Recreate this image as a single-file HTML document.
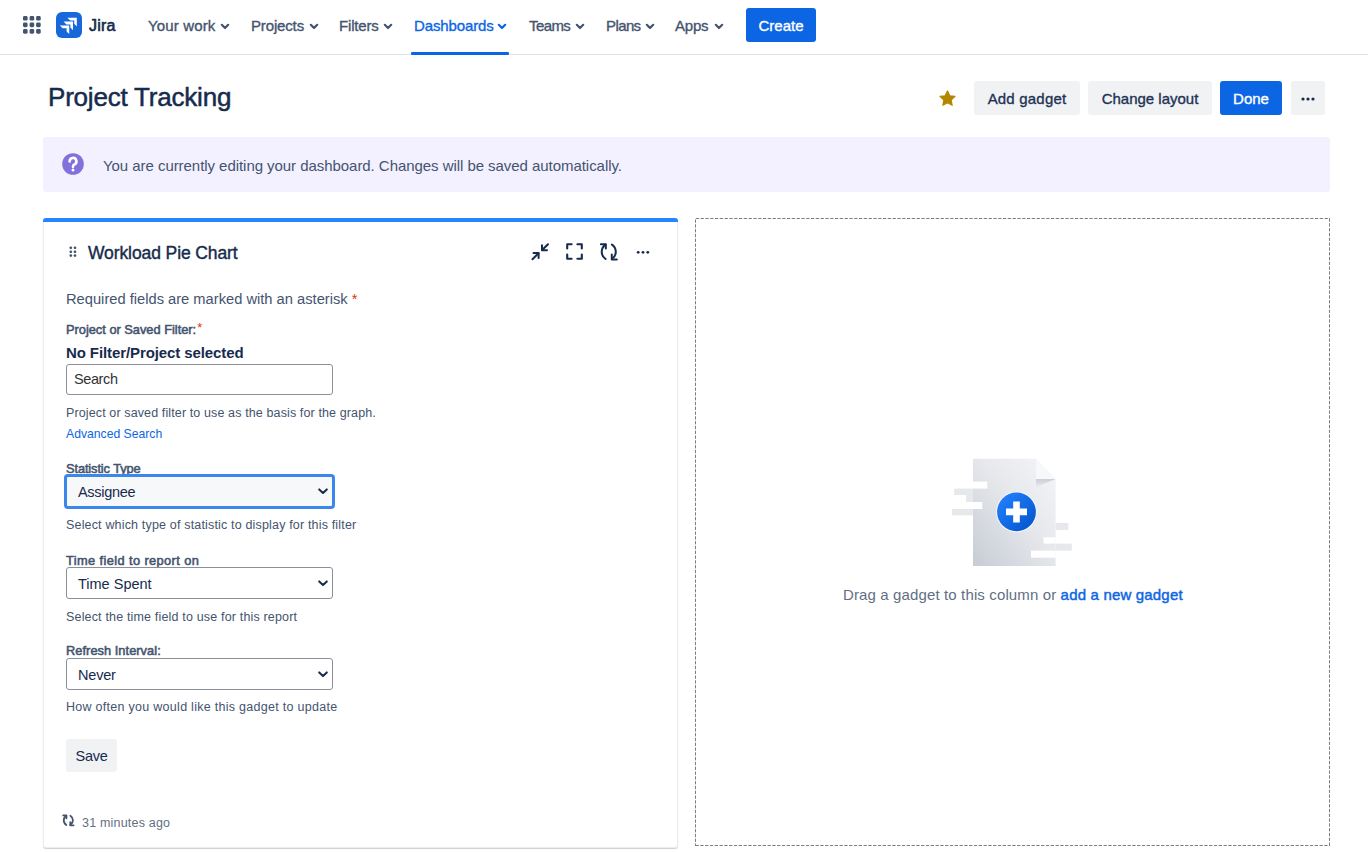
<!DOCTYPE html>
<html><head><meta charset="utf-8">
<style>
*{box-sizing:border-box;margin:0;padding:0}
html,body{width:1368px;height:852px;overflow:hidden;background:#fff;font-family:"Liberation Sans",sans-serif;color:#172B4D}
.a{position:absolute;white-space:nowrap}
#nav{position:absolute;left:0;top:0;width:1368px;height:55px;border-bottom:1px solid #DFE1E6;background:#fff}
.ni{position:absolute;top:17px;font-size:15px;font-weight:400;color:#44546F;line-height:17px;-webkit-text-stroke-width:0.35px}
.chev{position:absolute;top:22.5px}
.btn{position:absolute;border-radius:3px;background:#F1F2F4;color:#44546F;font-size:15px;font-weight:400;line-height:36px;height:34px;text-align:center;-webkit-text-stroke-width:0.35px}
.lbl{font-size:12.8px;font-weight:400;color:#44546F;line-height:15px;-webkit-text-stroke-width:0.55px}
.help{font-size:12.5px;color:#44546F;line-height:14px;letter-spacing:0.17px}
.sel{position:absolute;left:66px;width:267px;height:32px;border:1px solid #8A8F99;border-radius:3px;background:#fff}
.selt{position:absolute;left:12px;top:7px;font-size:14.5px;color:#172B4D;line-height:17px;letter-spacing:-0.2px}
.selc{position:absolute;right:5px;top:12px}
</style></head><body>

<div id="nav">
  <!-- grid icon -->
  <svg class="a" style="left:23px;top:16px" width="18" height="18" viewBox="0 0 18 18">
    <g fill="#44546F">
      <rect x="0" y="0" width="4.6" height="4.6" rx="1.4"/><rect x="6.6" y="0" width="4.6" height="4.6" rx="1.4"/><rect x="13.1" y="0" width="4.6" height="4.6" rx="1.4"/>
      <rect x="0" y="6.6" width="4.6" height="4.6" rx="1.4"/><rect x="6.6" y="6.6" width="4.6" height="4.6" rx="1.4"/><rect x="13.1" y="6.6" width="4.6" height="4.6" rx="1.4"/>
      <rect x="0" y="13.1" width="4.6" height="4.6" rx="1.4"/><rect x="6.6" y="13.1" width="4.6" height="4.6" rx="1.4"/><rect x="13.1" y="13.1" width="4.6" height="4.6" rx="1.4"/>
    </g>
  </svg>
  <!-- jira logo -->
  <svg class="a" style="left:56px;top:12px" width="26" height="26" viewBox="0 0 26 26">
    <rect width="26" height="26" rx="6" fill="#1868DB"/>
    <g fill="#fff">
      <path d="M11.4 5.8H20.8V14.4L18.2 11.8V8.6H14.2Z"/>
      <path d="M7.6 9.6H17V18.2L14.4 15.6V12.4H10.4Z"/>
      <path d="M3.8 13.4H13.2V22L10.6 19.4V16.2H6.6Z"/>
    </g>
  </svg>
  <div class="a" style="left:89px;top:17px;font-size:16px;font-weight:400;color:#172B4D;line-height:18px;letter-spacing:0.2px;-webkit-text-stroke:0.6px #172B4D">Jira</div>

  <div class="ni" style="left:148px;letter-spacing:0.15px">Your work</div>
  <svg class="chev" style="left:220px" width="10" height="7" viewBox="0 0 10 7"><path d="M1.8 1.8L5 5L8.2 1.8" stroke="#44546F" stroke-width="2.2" fill="none" stroke-linecap="round" stroke-linejoin="round"/></svg>
  <div class="ni" style="left:251px;letter-spacing:-0.15px">Projects</div>
  <svg class="chev" style="left:309px" width="10" height="7" viewBox="0 0 10 7"><path d="M1.8 1.8L5 5L8.2 1.8" stroke="#44546F" stroke-width="2.2" fill="none" stroke-linecap="round" stroke-linejoin="round"/></svg>
  <div class="ni" style="left:339px;letter-spacing:-0.17px">Filters</div>
  <svg class="chev" style="left:383px" width="10" height="7" viewBox="0 0 10 7"><path d="M1.8 1.8L5 5L8.2 1.8" stroke="#44546F" stroke-width="2.2" fill="none" stroke-linecap="round" stroke-linejoin="round"/></svg>
  <div class="ni" style="left:414px;color:#0C66E4;letter-spacing:-0.13px">Dashboards</div>
  <svg class="chev" style="left:497px" width="10" height="7" viewBox="0 0 10 7"><path d="M1.8 1.8L5 5L8.2 1.8" stroke="#0C66E4" stroke-width="2.2" fill="none" stroke-linecap="round" stroke-linejoin="round"/></svg>
  <div class="a" style="left:411px;top:52px;width:98px;height:3px;background:#0C66E4;border-radius:1px"></div>
  <div class="ni" style="left:529px;letter-spacing:-0.6px">Teams</div>
  <svg class="chev" style="left:575px" width="10" height="7" viewBox="0 0 10 7"><path d="M1.8 1.8L5 5L8.2 1.8" stroke="#44546F" stroke-width="2.2" fill="none" stroke-linecap="round" stroke-linejoin="round"/></svg>
  <div class="ni" style="left:606px;letter-spacing:-0.6px">Plans</div>
  <svg class="chev" style="left:645px" width="10" height="7" viewBox="0 0 10 7"><path d="M1.8 1.8L5 5L8.2 1.8" stroke="#44546F" stroke-width="2.2" fill="none" stroke-linecap="round" stroke-linejoin="round"/></svg>
  <div class="ni" style="left:675px;letter-spacing:-0.2px">Apps</div>
  <svg class="chev" style="left:714px" width="10" height="7" viewBox="0 0 10 7"><path d="M1.8 1.8L5 5L8.2 1.8" stroke="#44546F" stroke-width="2.2" fill="none" stroke-linecap="round" stroke-linejoin="round"/></svg>

  <div class="btn" style="left:746px;top:8px;width:70px;background:#0C66E4;color:#fff">Create</div>
</div>

<!-- title row -->
<div class="a" style="left:48px;top:82px;font-size:26px;color:#172B4D;line-height:30px;letter-spacing:-0.2px;-webkit-text-stroke:0.5px #172B4D">Project Tracking</div>

<svg class="a" style="left:938px;top:89px" width="19" height="19" viewBox="0 0 24 24"><path d="M12 2.5l2.9 6.1 6.6.8-4.9 4.6 1.3 6.6L12 17.3l-5.9 3.3 1.3-6.6-4.9-4.6 6.6-.8z" fill="#B38600" stroke="#B38600" stroke-width="1.5" stroke-linejoin="round"/></svg>
<div class="btn" style="left:974px;top:81px;width:106px;color:#1F3254;letter-spacing:0.2px">Add gadget</div>
<div class="btn" style="left:1088px;top:81px;width:124px;color:#1F3254">Change layout</div>
<div class="btn" style="left:1220px;top:81px;width:62px;background:#0C66E4;color:#fff">Done</div>
<div class="btn" style="left:1291px;top:81px;width:34px"></div>
<svg class="a" style="left:1300px;top:97px" width="16" height="4" viewBox="0 0 16 4"><circle cx="3" cy="2" r="1.6" fill="#172B4D"/><circle cx="8" cy="2" r="1.6" fill="#172B4D"/><circle cx="13" cy="2" r="1.6" fill="#172B4D"/></svg>

<!-- banner -->
<div class="a" style="left:43px;top:137px;width:1287px;height:55px;background:#F3F0FF;border-radius:3px"></div>
<svg class="a" style="left:62px;top:153px" width="22" height="22" viewBox="0 0 22 22"><circle cx="11" cy="11" r="10.8" fill="#8270DB"/><path d="M7.6 8.4a3.4 3.4 0 1 1 4.9 3c-1 .5-1.5 1-1.5 2v.5" stroke="#fff" stroke-width="2.6" fill="none" stroke-linecap="round"/><circle cx="11" cy="17" r="1.5" fill="#fff"/></svg>
<div class="a" style="left:103px;top:157px;font-size:15px;color:#44546F;line-height:17px;letter-spacing:-0.05px">You are currently editing your dashboard. Changes will be saved automatically.</div>

<!-- gadget card -->
<div class="a" style="left:43px;top:218px;width:635px;height:630px;background:#fff;border:1px solid #EBECF0;border-top:none;border-radius:3px;box-shadow:0 1px 1px rgba(9,30,66,0.2)"></div>
<div class="a" style="left:43px;top:218px;width:635px;height:4px;background:#2684FF;border-radius:3px 3px 0 0"></div>

<svg class="a" style="left:69px;top:246px" width="9" height="12" viewBox="0 0 9 12"><g fill="#44546F"><circle cx="1.8" cy="1.8" r="1.35"/><circle cx="6" cy="1.8" r="1.35"/><circle cx="1.8" cy="5.8" r="1.35"/><circle cx="6" cy="5.8" r="1.35"/><circle cx="1.8" cy="9.6" r="1.35"/><circle cx="6" cy="9.6" r="1.35"/></g></svg>
<div class="a" style="left:88px;top:243px;font-size:17.5px;color:#172B4D;line-height:20px;letter-spacing:-0.1px;-webkit-text-stroke:0.4px #172B4D">Workload Pie Chart</div>

<!-- header icons -->
<svg class="a" style="left:529px;top:241px" width="22" height="21" viewBox="0 0 22 21">
  <g stroke="#172B4D" stroke-width="2" fill="none" stroke-linecap="round" stroke-linejoin="round">
    <path d="M19 3.2L13.2 9"/><path d="M13 4.2V9.3H18"/>
    <path d="M3.5 18.2L9.5 12.2"/><path d="M4.5 12.1H9.6V17"/>
  </g>
</svg>
<svg class="a" style="left:565px;top:242px" width="19" height="19" viewBox="0 0 19 19">
  <g stroke="#172B4D" stroke-width="2.1" fill="none" stroke-linecap="round" stroke-linejoin="round">
    <path d="M2.2 6.5V2.2H6.6"/><path d="M12.4 2.2H16.8V6.5"/><path d="M16.8 12.5V16.8H12.4"/><path d="M6.6 16.8H2.2V12.5"/>
  </g>
</svg>
<svg class="a" style="left:599px;top:242px" width="20" height="20" viewBox="0 0 20 20">
  <g stroke="#172B4D" stroke-width="2" fill="none" stroke-linecap="round" stroke-linejoin="round">
    <path d="M6.6 2.6A8.6 8.6 0 0 0 6.6 17"/><path d="M1.9 2.2H6.8V6.6"/>
    <path d="M12.9 2.6A8.6 8.6 0 0 1 12.9 17"/><path d="M17.8 17.4H12.8V12.6"/>
  </g>
</svg>
<svg class="a" style="left:636px;top:250px" width="14" height="5" viewBox="0 0 14 5"><g fill="#172B4D"><circle cx="2.2" cy="2.3" r="1.4"/><circle cx="7" cy="2.3" r="1.4"/><circle cx="11.8" cy="2.3" r="1.4"/></g></svg>

<!-- form -->
<div class="a" style="left:66px;top:291px;font-size:14.7px;color:#44546F;line-height:17px">Required fields are marked with an asterisk <span style="color:#DE350B">*</span></div>
<div class="a lbl" style="left:66px;top:322px">Project or Saved Filter:<span style="color:#DE350B;-webkit-text-stroke-width:0;position:relative;top:-2px;margin-left:1px">*</span></div>
<div class="a" style="left:66px;top:344px;font-size:15px;font-weight:700;color:#172B4D;line-height:17px;letter-spacing:-0.1px">No Filter/Project selected</div>
<div class="a" style="left:66px;top:364px;width:267px;height:31px;border:1px solid #8D9099;border-radius:3px;background:#fff"></div>
<div class="a" style="left:74px;top:371px;font-size:14.5px;color:#333;line-height:17px;letter-spacing:-0.4px">Search</div>
<div class="a help" style="left:66px;top:406px;letter-spacing:0.12px">Project or saved filter to use as the basis for the graph.</div>
<div class="a" style="left:66px;top:427px;font-size:12.2px;color:#0C66E4;line-height:14px">Advanced Search</div>

<div class="a lbl" style="left:66px;top:461px;letter-spacing:-0.1px">Statistic Type</div>
<div class="a" style="left:64px;top:474px;width:271px;height:35px;border:3px solid #3B87EB;border-radius:4px;background:#F7F8F9"></div>
<div class="a" style="left:78px;top:484px;font-size:14.5px;color:#172B4D;line-height:17px;letter-spacing:-0.3px">Assignee</div>
<svg class="a" style="left:317px;top:487px" width="12" height="9" viewBox="0 0 12 9"><path d="M2.2 2.4L6 6L9.8 2.4" stroke="#172B4D" stroke-width="2" fill="none" stroke-linecap="round" stroke-linejoin="round"/></svg>
<div class="a help" style="left:66px;top:518px">Select which type of statistic to display for this filter</div>

<div class="a lbl" style="left:66px;top:553px;letter-spacing:0.4px">Time field to report on</div>
<div class="sel" style="top:567px"></div>
<div class="a" style="left:78px;top:576px;font-size:14.5px;color:#172B4D;line-height:17px;letter-spacing:0px">Time Spent</div>
<svg class="a" style="left:317px;top:579px" width="12" height="9" viewBox="0 0 12 9"><path d="M2.2 2.4L6 6L9.8 2.4" stroke="#172B4D" stroke-width="2" fill="none" stroke-linecap="round" stroke-linejoin="round"/></svg>
<div class="a help" style="left:66px;top:609.5px">Select the time field to use for this report</div>

<div class="a lbl" style="left:66px;top:643px;letter-spacing:0.05px">Refresh Interval:</div>
<div class="sel" style="top:658px"></div>
<div class="a" style="left:78px;top:667px;font-size:14.5px;color:#172B4D;line-height:17px;letter-spacing:-0.2px">Never</div>
<svg class="a" style="left:317px;top:670px" width="12" height="9" viewBox="0 0 12 9"><path d="M2.2 2.4L6 6L9.8 2.4" stroke="#172B4D" stroke-width="2" fill="none" stroke-linecap="round" stroke-linejoin="round"/></svg>
<div class="a help" style="left:66px;top:700px;letter-spacing:0.28px">How often you would like this gadget to update</div>

<div class="btn" style="left:66px;top:739px;width:51px;height:33px;line-height:35px;font-weight:400;font-size:14.5px;color:#172B4D;letter-spacing:-0.3px;-webkit-text-stroke-width:0">Save</div>

<svg class="a" style="left:62px;top:814px" width="13" height="13" viewBox="0 0 20 20">
  <g stroke="#44546F" stroke-width="2.8" fill="none" stroke-linecap="round" stroke-linejoin="round">
    <path d="M6.6 2.6A8.6 8.6 0 0 0 6.6 17"/><path d="M1.9 2.2H6.8V6.6"/>
    <path d="M12.9 2.6A8.6 8.6 0 0 1 12.9 17"/><path d="M17.8 17.4H12.8V12.6"/>
  </g>
</svg>
<div class="a" style="left:82px;top:816px;font-size:12.5px;color:#626F86;line-height:14px;letter-spacing:0.2px">31 minutes ago</div>

<!-- empty column -->
<svg class="a" style="left:695px;top:218px" width="635" height="628" viewBox="0 0 635 628">
  <g stroke="#7E7E7E" stroke-width="1" fill="none" stroke-dasharray="3.3 1.5">
    <path d="M0.8 0.5H635"/><path d="M0.5 1.5V628"/><path d="M634.5 0.5V628"/><path d="M0.5 627.5H635"/>
  </g>
</svg>

<svg class="a" style="left:950px;top:456px" width="125" height="112" viewBox="0 0 125 112">
  <defs>
    <linearGradient id="pg" x1="1" y1="0" x2="0" y2="1">
      <stop offset="0" stop-color="#F4F5F7"/><stop offset="0.45" stop-color="#E6E8EC"/><stop offset="1" stop-color="#C7CCD4"/>
    </linearGradient>
    <linearGradient id="bc" x1="0" y1="0" x2="1" y2="1">
      <stop offset="0" stop-color="#2684FF"/><stop offset="1" stop-color="#0052CC"/>
    </linearGradient>
    <linearGradient id="sh" x1="0" y1="0" x2="0" y2="1">
      <stop offset="0" stop-color="#C9CDD5"/><stop offset="1" stop-color="#E9EBEF"/>
    </linearGradient>
  </defs>
  <path d="M23 2.8H86L105.6 23V110H23Z" fill="url(#pg)"/>
  <path d="M86 2.8V23H105.6Z" fill="#F7F8FA"/>
  <path d="M86 23H105.6L86 31Z" fill="url(#sh)"/>
  <g fill="#fff">
    <rect x="23" y="25.6" width="14.3" height="7"/>
    <rect x="23" y="46" width="9.3" height="7"/>
    <rect x="93.6" y="81.3" width="12" height="6.3"/>
    <rect x="81" y="94.6" width="24.6" height="7.1"/>
  </g>
  <g fill="#E6E8EC">
    <rect x="4.2" y="32.6" width="18.8" height="6.4"/>
    <rect x="16.1" y="39" width="6.9" height="7"/>
    <rect x="2" y="53" width="21" height="6.4"/>
    <rect x="105.6" y="67" width="12.7" height="7"/>
    <rect x="105.6" y="87.6" width="16.2" height="7"/>
  </g>
  <circle cx="66.5" cy="55.9" r="20.5" fill="#fff" opacity="0.6"/>
  <circle cx="66.5" cy="55.9" r="19.4" fill="url(#bc)"/>
  <path d="M66.5 45.4V66.4M56 55.9H77" stroke="#fff" stroke-width="6.6"/>
</svg>
<div class="a" style="left:843px;top:586px;font-size:15px;color:#626F86;line-height:17px;letter-spacing:0.13px">Drag a gadget to this column or <span style="color:#0C66E4;-webkit-text-stroke:0.45px #0C66E4;letter-spacing:0.18px">add a new gadget</span></div>

</body></html>
